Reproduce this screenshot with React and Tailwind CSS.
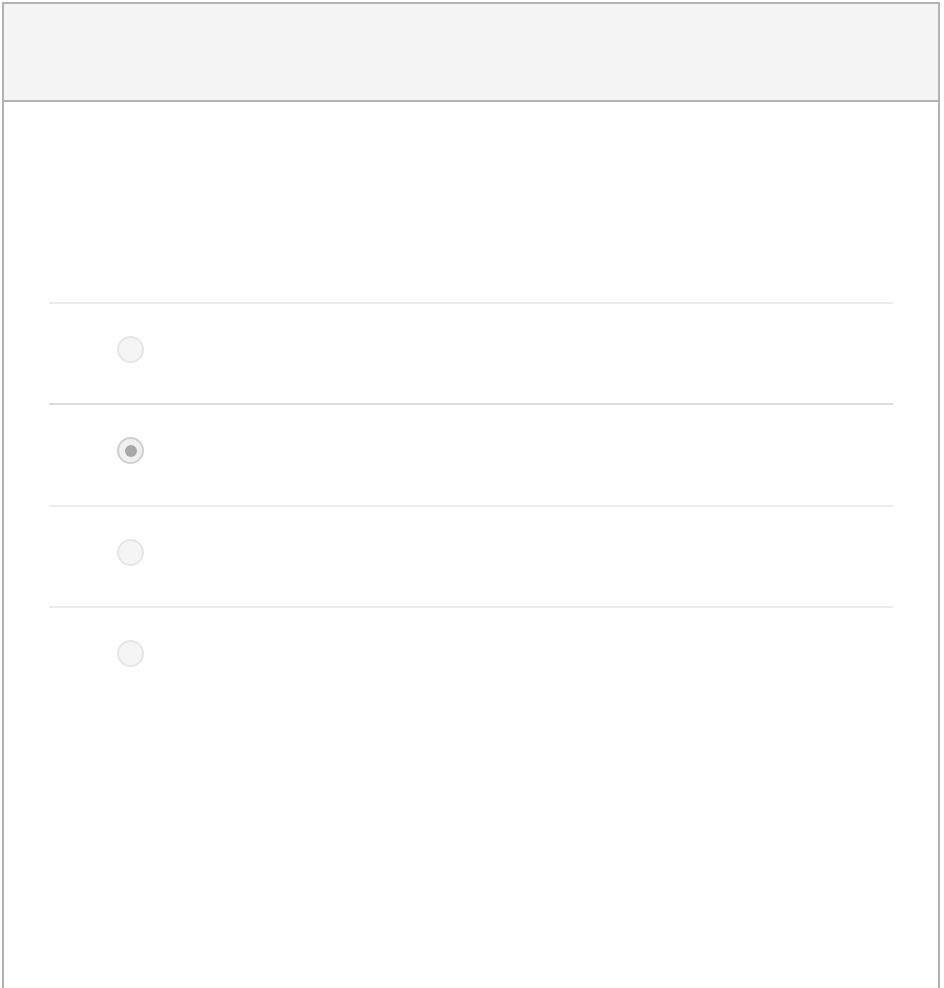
const options = [
  { id: 1, selected: false },
  { id: 2, selected: true },
  { id: 3, selected: false },
  { id: 4, selected: false },
];

// Radio list panel
export default function App() {
  return (
    <div className="min-h-[988px] bg-white pt-[2px] pl-[2px] font-['Liberation_Sans',sans-serif]">
      <div className="w-[938px] min-h-[990px] border-2 border-b-0 border-[#b3b3b3]">
        {/* Header bar */}
        <div className="h-[98px] bg-[#f4f4f4] border-b-2 border-[#b3b3b3]"></div>

        {/* Options */}
        <div className="px-[45px] pt-[200px]">
          {options.map((opt, i) => (
            <div
              key={opt.id}
              className={`h-[101.4px] border-t-2 pt-[32px] pl-[68px] ${
                i === 1 ? "border-[#dcdcdc]" : "border-[#ececec]"
              }`}
            >
              <div
                className={`w-[27px] h-[27px] rounded-full border-2 flex items-center justify-center ${
                  opt.selected
                    ? "bg-[#f0f0f0] border-[#cfcfcf]"
                    : "bg-[#f5f5f5] border-[#e6e6e6]"
                }`}
              >
                {opt.selected && (
                  <div className="w-[12px] h-[12px] rounded-full bg-[#a8a8a8]"></div>
                )}
              </div>
            </div>
          ))}
        </div>
      </div>
    </div>
  );
}
